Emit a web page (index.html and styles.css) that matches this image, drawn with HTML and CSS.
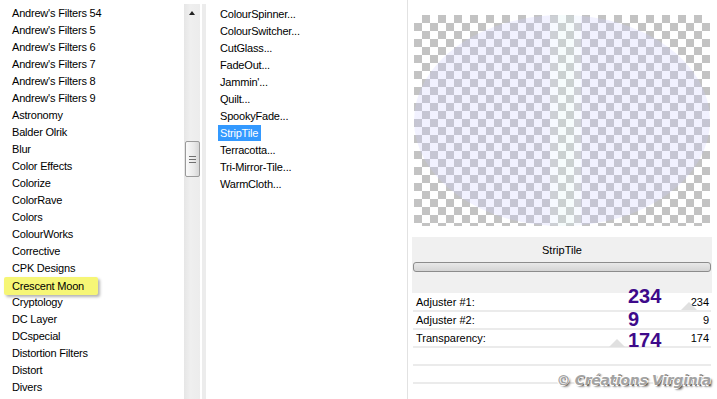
FILE: index.html
```html
<!DOCTYPE html>
<html>
<head>
<meta charset="utf-8">
<link rel="stylesheet" href="styles.css">
</head>
<body>
<div class="app">
  <ul class="cats">
    <li>Andrew's Filters 54</li>
    <li>Andrew's Filters 5</li>
    <li>Andrew's Filters 6</li>
    <li>Andrew's Filters 7</li>
    <li>Andrew's Filters 8</li>
    <li>Andrew's Filters 9</li>
    <li>Astronomy</li>
    <li>Balder Olrik</li>
    <li>Blur</li>
    <li>Color Effects</li>
    <li>Colorize</li>
    <li>ColorRave</li>
    <li>Colors</li>
    <li>ColourWorks</li>
    <li>Corrective</li>
    <li>CPK Designs</li>
    <li><span class="mark">Crescent Moon</span></li>
    <li>Cryptology</li>
    <li>DC Layer</li>
    <li>DCspecial</li>
    <li>Distortion Filters</li>
    <li>Distort</li>
    <li>Divers</li>
  </ul>
  <div class="vscroll">
    <span class="up"></span>
    <div class="thumb"><i></i><i></i><i></i></div>
  </div>
  <div class="gap"></div>
  <div class="strip"></div>
  <ul class="filters">
    <li>ColourSpinner...</li>
    <li>ColourSwitcher...</li>
    <li>CutGlass...</li>
    <li>FadeOut...</li>
    <li>Jammin'...</li>
    <li>Quilt...</li>
    <li>SpookyFade...</li>
    <li><span class="sel">StripTile</span></li>
    <li>Terracotta...</li>
    <li>Tri-Mirror-Tile...</li>
    <li>WarmCloth...</li>
  </ul>
  <div class="pane">
    <div class="checker"><div class="ellipse"></div></div>
    <div class="band">
      <div class="name">StripTile</div>
      <div class="bar"></div>
    </div>
    <div class="rows">
      <div class="row"><span>Adjuster #1:</span><span>234</span></div>
      <div class="row"><span>Adjuster #2:</span><span>9</span></div>
      <div class="row"><span>Transparency:</span><span>174</span></div>
      <div class="row"></div>
      <div class="row"></div>
    </div>
    <span class="tri t1"></span>
    <span class="tri t3"></span>
    <span class="big b1">234</span>
    <span class="big b2">9</span>
    <span class="big b3">174</span>
    <span class="wm">© Créations Virginia</span>
  </div>
</div>
</body>
</html>
```

FILE: styles.css
```css
* { box-sizing: border-box; }
html, body { margin: 0; padding: 0; background: #fff; }
body { width: 717px; height: 399px; overflow: hidden; font-family: "Liberation Sans", Arial, sans-serif; font-size: 11px; color: #000; }

.app { display: flex; height: 399px; }

ul { list-style: none; margin: 0; }
li { height: 17px; line-height: 17px; white-space: nowrap; letter-spacing: -0.2px; }

.cats { width: 184px; padding: 5px 0 0 12px; flex: none; }
.mark {
  display: inline-block;
  margin-left: -8px;
  padding: 0 14px 0 8px;
  height: 18px;
  line-height: 18px;
  background: #f6f676;
  border-radius: 2px;
  box-shadow: 2px 2px 3px rgba(0,0,0,0.3);
}

.vscroll {
  width: 16px; flex: none;
  margin-top: 4px;
  background: linear-gradient(to right, #e6e6e6, #efefef 40%, #ececec);
  display: flex; flex-direction: column; align-items: center;
}
.up {
  margin-top: 7px;
  width: 0; height: 0;
  border-left: 3px solid transparent;
  border-right: 3px solid transparent;
  border-bottom: 4px solid #222;
}
.thumb {
  margin-top: 126px;
  width: 15px; height: 36px;
  border: 1px solid #9a9a9a;
  border-radius: 2px;
  background: linear-gradient(to right, #fafafa, #e9e9e9 60%, #d6d6d6);
  display: flex; flex-direction: column; align-items: center; justify-content: center; gap: 2px;
}
.thumb i { display: block; width: 7px; height: 1px; background: #6f6f6f; }

.gap { width: 2px; flex: none; }
.strip { width: 4px; flex: none; margin-top: 4px; background: #ececec; }

.filters { width: 202px; flex: none; padding: 6px 0 0 14px; border-right: 1px solid #e2e2e2; }
.sel {
  display: inline-block;
  margin-left: -2px;
  padding: 0 3px 0 2px;
  height: 16px; line-height: 16px;
  background: #3399ff; color: #fff;
}

.pane { position: relative; flex: 1; }

.checker {
  position: relative;
  margin: 15px 0 0 6px;
  width: 296px; height: 211px;
  background-color: #fff;
  background-image: conic-gradient(#c3c3c3 25%, #fff 0 50%, #c3c3c3 0 75%, #fff 0);
  background-size: 16px 16px;
}
.ellipse {
  position: absolute; inset: 0;
  border-radius: 50%;
  background: linear-gradient(to right,
    rgba(205,205,255,0.27) 0 45.9%,
    rgba(228,238,255,0.3) 45.9% 48.6%,
    rgba(222,244,244,0.28) 48.6% 54%,
    rgba(228,238,255,0.3) 54% 56.5%,
    rgba(205,205,255,0.27) 56.5%);
}

.band {
  margin: 11px 0 0 4px;
  width: 300px; height: 56px;
  background: #f0f0f0;
  padding: 6px 1px 0;
}
.name { text-align: center; line-height: 14px; height: 19px; }
.bar {
  height: 10px;
  border: 1px solid #8c8c8c;
  border-radius: 3px;
  background: linear-gradient(#e8e8e8, #d4d4d4);
}

.rows { margin: 1px 0 0 5px; width: 298px; }
.row {
  display: flex; justify-content: space-between;
  height: 18px; line-height: 16px;
  border-bottom: 2px solid #ebebeb;
  padding: 0 2px 0 3px;
}

.tri {
  position: absolute;
  width: 0; height: 0;
  border-left: 8px solid transparent;
  border-right: 8px solid transparent;
  border-bottom: 8px solid #e0e0e0;
}
.t1 { left: 273px; top: 302px; }
.t3 { left: 201px; top: 339px; }

.big {
  position: absolute;
  left: 220px;
  font-family: "Liberation Sans", Arial, sans-serif;
  font-weight: bold; font-size: 20px; line-height: 20px;
  color: #3e0a8a;
}
.b1 { top: 286px; }
.b2 { top: 309px; }
.b3 { top: 330px; }

.wm {
  position: absolute;
  right: 6px; top: 372px;
  font-family: "DejaVu Sans", sans-serif;
  font-weight: bold; font-style: italic;
  font-size: 14px; letter-spacing: -0.3px;
  color: #a3a3a3;
  text-shadow: -1px -1px 0 #fff, 1px -1px 0 #fff, -1px 1px 0 #fff, 1px 1px 1px #555, 2px 2px 2px rgba(0,0,0,0.4);
}
```
